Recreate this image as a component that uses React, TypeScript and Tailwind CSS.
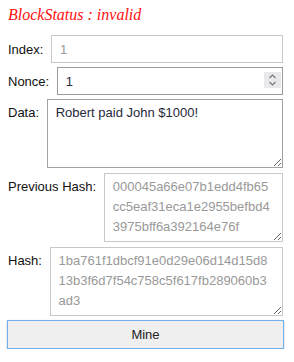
import {useState} from 'react'

const label = 'shrink-0 text-[13px] text-[#111] mr-[7.6px]'
const field =
  'flex-1 min-w-0 bg-white border px-[8px] text-[13px] leading-[20px] outline-none'

const Spinner = () => (
  <div className="absolute right-[2px] top-[5px] w-[17px] h-[16px] bg-[#e9e9ed] flex items-center justify-center">
    <svg width="9" height="14" viewBox="0 0 9 14" fill="none" stroke="#777" strokeWidth="1.2">
      <path d="M1.5 5 L4.5 2 L7.5 5" />
      <path d="M1.5 9 L4.5 12 L7.5 9" />
    </svg>
  </div>
)

const App = () => {
  const [nonce, setNonce] = useState('1')
  const [data, setData] = useState('Robert paid John $1000!')

  return (
    <div className="ml-2 w-[275px] font-['Liberation_Sans',Arial,sans-serif]">
      <div className="pt-[5px] mb-[10px] text-[16px] leading-[20px] italic text-[#ff1010] font-['Liberation_Serif','Times_New_Roman',serif]">
        BlockStatus : invalid
      </div>

      <div className="flex items-baseline mb-[4px]">
        <label className={label} htmlFor="index">
          Index:
        </label>
        <input
          id="index"
          disabled
          value="1"
          className={`${field} h-[28px] py-[3px] border-[#c8c8c8] text-[#999]`}
        />
      </div>

      <div className="flex items-baseline mb-[4px]">
        <label className={label} htmlFor="nonce">
          Nonce:
        </label>
        <div className="relative flex-1 min-w-0 flex">
          <input
            id="nonce"
            type="text"
            value={nonce}
            onChange={e => setNonce(e.target.value)}
            className={`${field} h-[28px] py-[3px] border-[#9a9a9a] text-[#1f2a3a]`}
          />
          <Spinner />
        </div>
      </div>

      <div className="flex items-baseline mb-[5px]">
        <label className={label} htmlFor="data">
          Data:
        </label>
        <textarea
          id="data"
          rows={3}
          value={data}
          onChange={e => setData(e.target.value)}
          className={`${field} h-[69px] pt-[3px] border-[#a3a3a3] text-[#1f2a3a]`}
        />
      </div>

      <div className="flex items-baseline mb-[5px]">
        <label className={label} htmlFor="prev">
          Previous Hash:
        </label>
        <textarea
          id="prev"
          rows={3}
          disabled
          value="000045a66e07b1edd4fb65cc5eaf31eca1e2955befbd43975bff6a392164e76f"
          className={`${field} h-[69px] pt-[3px] border-[#c8c8c8] text-[#999] break-all`}
        />
      </div>

      <div className="flex items-baseline mb-[4px]">
        <label className={label} htmlFor="hash">
          Hash:
        </label>
        <textarea
          id="hash"
          rows={3}
          disabled
          value="1ba761f1dbcf91e0d29e06d14d15d813b3f6d7f54c758c5f617fb289060b3ad3"
          className={`${field} h-[69px] pt-[3px] pr-[12px] border-[#c8c8c8] text-[#999] break-all`}
        />
      </div>

      <button
        type="button"
        className="-ml-px w-[277px] h-[29px] bg-[#efefef] border border-[#70b3ec] text-[13px] text-[#222] shadow-[0_1px_2px_rgba(0,0,0,0.25)]"
      >
        Mine
      </button>
    </div>
  )
}

export default App
